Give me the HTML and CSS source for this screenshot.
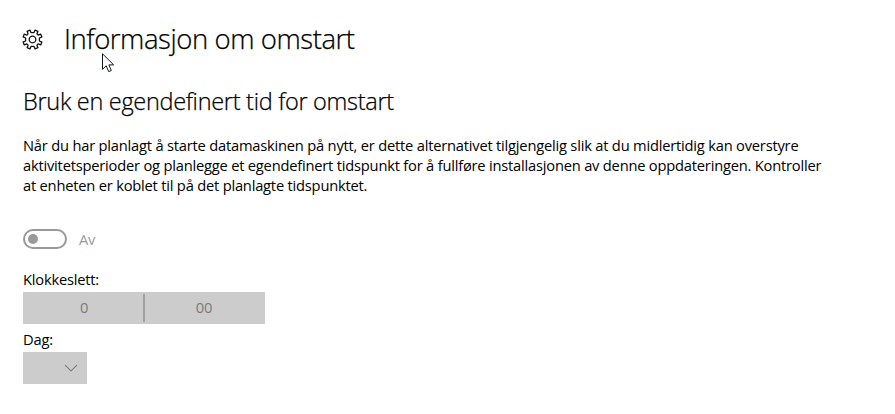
FILE: index.html
```html
<!DOCTYPE html>
<html lang="nb">
<head>
<meta charset="utf-8">
<title>Informasjon om omstart</title>
<link rel="stylesheet" href="styles.css">
</head>
<body>
<main class="page">
  <header class="header">
    <svg class="gear" viewBox="-10.5 -10.5 21 21" aria-hidden="true">
      <path d="M-1.5 -6.9L-2.6 -9.4L-5.4 -8.2L-4.4 -5.6L-5.6 -4.4L-8.2 -5.4L-9.4 -2.6L-6.9 -1.5V1.5L-9.4 2.6L-8.2 5.4L-5.6 4.4L-4.4 5.6L-5.4 8.2L-2.6 9.4L-1.5 6.9H1.5L2.6 9.4L5.4 8.2L4.4 5.6L5.6 4.4L8.2 5.4L9.4 2.6L6.9 1.5V-1.5L9.4 -2.6L8.2 -5.4L5.6 -4.4L4.4 -5.6L5.4 -8.2L2.6 -9.4L1.5 -6.9Z"/>
      <circle r="3.3"/>
    </svg>
    <h1 class="title">Informasjon om omstart</h1>
  </header>
  <h2 class="subtitle">Bruk en egendefinert tid for omstart</h2>
  <p class="description">
    <span class="line">Når du har planlagt å starte datamaskinen på nytt, er dette alternativet tilgjengelig slik at du midlertidig kan overstyre</span>
    <span class="line">aktivitetsperioder og planlegge et egendefinert tidspunkt for å fullføre installasjonen av denne oppdateringen. Kontroller</span>
    <span class="line">at enheten er koblet til på det planlagte tidspunktet.</span>
  </p>
  <div class="toggle-row">
    <span class="toggle"><span class="knob"></span></span>
    <span class="toggle-label">Av</span>
  </div>
  <div class="label time-label">Klokkeslett:</div>
  <div class="time">
    <span class="hour">0</span>
    <span class="divider"></span>
    <span class="minute">00</span>
  </div>
  <div class="label day-label">Dag:</div>
  <div class="select">
    <svg class="chevron" viewBox="0 0 14 8" aria-hidden="true"><path d="M1 1L7 7L13 1"/></svg>
  </div>
</main>
<svg class="cursor" viewBox="0 0 13 20" aria-hidden="true"><path d="M.5 .8V16.3L4.2 12.8L6.7 18.6L9.3 17.5L6.9 11.9H11.7Z"/></svg>
</body>
</html>
```

FILE: styles.css
```css
* { box-sizing: border-box; }
body {
  margin: 0;
  background: #fff;
  color: #000;
  font-family: "Open Sans", "Noto Sans", sans-serif;
  font-size: 14.7px;
  letter-spacing: -.21px;
}
.page { padding: 19px 23px 0; }
.header { display: flex; align-items: center; height: 40px; }
.gear { width: 21px; height: 21px; margin: 0 21px 0 -1px; fill: none; stroke: #111; stroke-width: 1.3; stroke-linejoin: round; }
.title, .subtitle { font-weight: 300; -webkit-text-stroke: .25px #000; white-space: nowrap; }
.title { margin: 0; font-size: 27.5px; letter-spacing: -.43px; line-height: 40px; }
.subtitle { margin: 26px 0 0; font-size: 23.5px; letter-spacing: -.29px; line-height: 32px; }
.description { margin: 18px 0 0; line-height: 20px; }
.line { display: block; white-space: nowrap; }
.toggle-row { display: flex; align-items: center; height: 20px; margin-top: 34px; color: #999; }
.toggle { display: flex; align-items: center; width: 44px; height: 20px; padding-left: 3px; border: 2px solid #999; border-radius: 10px; }
.knob { width: 10px; height: 10px; border-radius: 50%; background: #999; }
.toggle-label { margin-left: 12px; }
.label { height: 20px; line-height: 20px; }
.time-label { margin-top: 20px; }
.time { display: flex; align-items: center; width: 242px; height: 32px; margin-top: 3px; background: #ccc; color: #7a7a7a; }
.hour, .minute { flex: 1; line-height: 31px; height: 32px; text-align: center; }
.hour { padding-left: 2px; }
.minute { padding-right: 2px; }
.divider { width: 2px; height: 28px; background: #a0a0a0; }
.day-label { margin-top: 5px; }
.select { display: flex; align-items: center; justify-content: flex-end; width: 64px; height: 32px; margin-top: 3px; padding-right: 9px; background: #ccc; }
.chevron { width: 14px; height: 8px; fill: none; stroke: #858585; stroke-width: 1.1; }
.cursor { position: absolute; left: 102px; top: 53px; width: 13px; height: 20px; fill: #fff; stroke: #111522; stroke-width: 1; }
```
